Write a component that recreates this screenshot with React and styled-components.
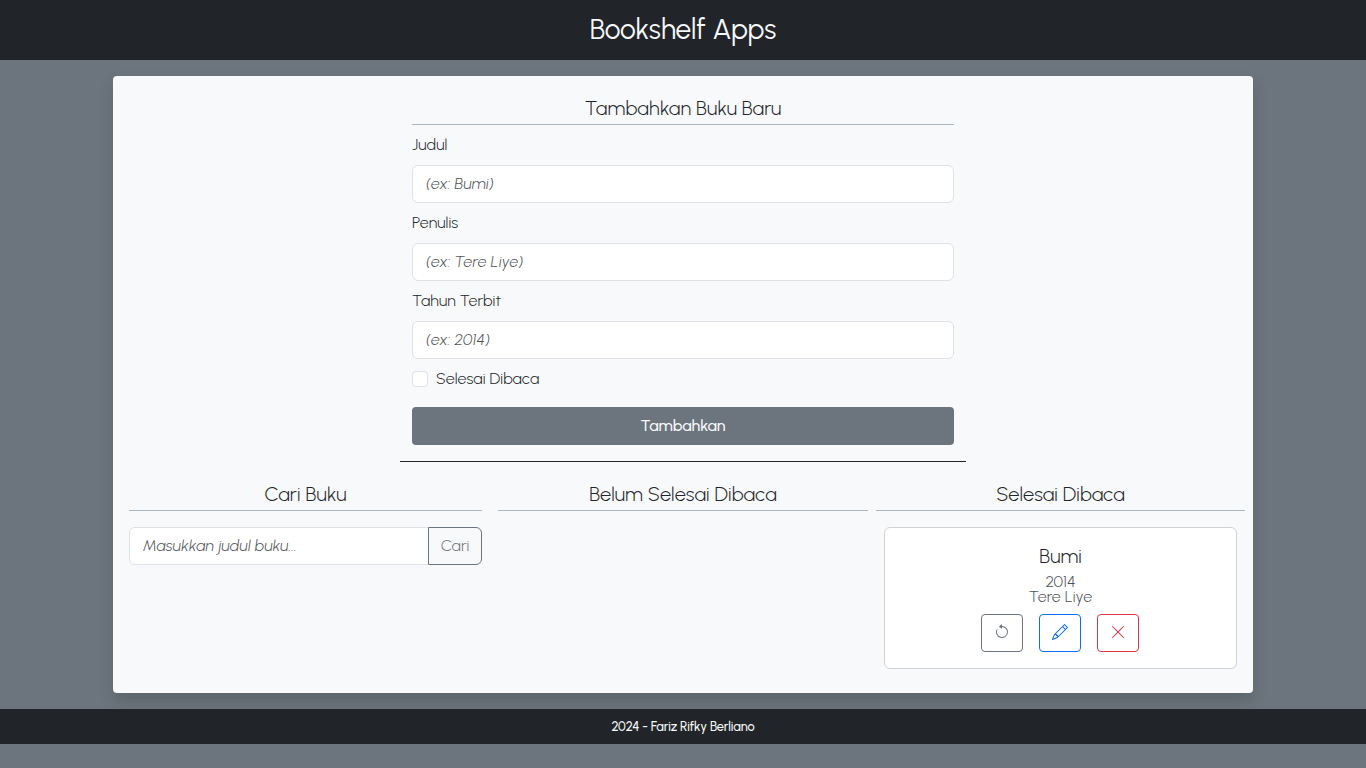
import React from "react";
import styled, { createGlobalStyle } from "styled-components";
import { BsArrowCounterclockwise, BsPencil, BsXLg } from "react-icons/bs";

const GlobalStyle = createGlobalStyle`
  *, *::before, *::after { box-sizing: border-box; }
  body {
    margin: 0;
    background: #6c757d;
    color: #212529;
    font: 300 16px/24px Urbanist, Lato, "Open Sans", sans-serif;
  }
  h1, h2, h3, p { margin: 0; }
`;

const Text = styled.span`
  letter-spacing: ${(p) => p.$track || 0}px;
  margin-right: ${(p) => -(p.$track || 0)}px;
  white-space: nowrap;
`;

const Header = styled.header`
  height: 60px;
  padding-top: 12px;
  background: #212529;
  color: #f8f9fa;
  text-align: center;
`;

const Title = styled.h1`
  font-size: 28px;
  line-height: 34px;
  font-weight: 430;
`;

const Main = styled.main`
  width: 1140px;
  height: 617px;
  margin: 16px auto;
  padding-top: 20px;
  background: #f8f9fa;
  border-radius: 4px;
  box-shadow: 0 8px 16px rgba(0, 0, 0, 0.15);
`;

const FormSection = styled.section`
  width: 566px;
  margin: 0 auto;
  padding: 0 12px 16px;
  border-bottom: 1px solid #212529;
`;

const SectionTitle = styled.h2`
  font-size: 20px;
  line-height: 24px;
  font-weight: 300;
  text-align: center;
  padding-bottom: 4px;
  border-bottom: 1px solid #adb5bd;
`;

const Field = styled.div`
  margin-top: 8px;
`;

const Label = styled.label`
  display: block;
  margin-bottom: 8px;
`;

const Input = styled.input`
  display: block;
  width: 100%;
  min-width: 0;
  height: 38px;
  padding: 5px 12px 7px 13px;
  border: 1px solid #dee2e6;
  border-radius: ${(p) => (p.$joined ? "6px 0 0 6px" : "6px")};
  background: #fff;
  font: inherit;
  letter-spacing: 0.14px;
  &::placeholder {
    color: #4f5459;
    opacity: 1;
    font-style: italic;
  }
`;

const CheckRow = styled.label`
  display: flex;
  align-items: center;
  gap: 8px;
  height: 24px;
  margin: 8px 0 16px;
`;

const Checkbox = styled.input`
  appearance: none;
  width: 16px;
  height: 16px;
  margin: 0;
  border: 1px solid #dee2e6;
  border-radius: 4px;
  background: #fff;
`;

const SubmitButton = styled.button`
  display: block;
  width: 100%;
  height: 38px;
  padding: 0 0 1px;
  border: 0;
  border-radius: 4px;
  background: #6c757d;
  color: #f8f9fa;
  font: inherit;
  font-weight: 500;
`;

const Columns = styled.div`
  display: grid;
  grid-template-columns: 353px 370px 369px;
  column-gap: 16px;
  padding: 20px 8px 0 16px;
`;

const Column = styled.section`
  margin-left: ${(p) => (p.$last ? "-8px" : "0")};
  width: ${(p) => (p.$last ? "369px" : "auto")};
`;

const SearchGroup = styled.form`
  display: flex;
  margin-top: 16px;
`;

const SearchButton = styled.button`
  flex: 0 0 54px;
  height: 38px;
  margin-left: -1px;
  padding: 0;
  border: 1px solid #6c757d;
  border-radius: 0 6px 6px 0;
  background: transparent;
  color: #6c757d;
  font: inherit;
  font-weight: 340;
`;

const BookCard = styled.article`
  height: 142px;
  margin: 16px 8px 0;
  padding-top: 16px;
  border: 1px solid #d0d2d4;
  border-radius: 6px;
  background: #fff;
  text-align: center;
`;

const BookTitle = styled.h3`
  font-size: 20px;
  line-height: 24px;
  font-weight: 300;
  margin-bottom: 6px;
`;

const BookMeta = styled.p`
  line-height: 15px;
  color: #4d5256;
`;

const Actions = styled.div`
  display: flex;
  justify-content: center;
  gap: 16px;
  margin: 10px 1px 0 0;
`;

const ActionButton = styled.button`
  display: flex;
  align-items: center;
  justify-content: center;
  width: 42px;
  height: 38px;
  padding: 0 0 2px;
  border: 1px solid ${(p) => p.$color};
  border-radius: 4px;
  background: transparent;
  color: ${(p) => p.$color};
  svg { width: 16px; height: 16px; }
`;

const Footer = styled.footer`
  height: 35px;
  background: #212529;
  color: #f8f9fa;
  text-align: center;
  font-size: 12.8px;
  line-height: 35px;
  font-weight: 500;
`;

const fields = [
  { label: "Judul", hint: "(ex: Bumi)" },
  { label: "Penulis", hint: "(ex: Tere Liye)" },
  { label: "Tahun Terbit", hint: "(ex: 2014)" },
];

export default function App() {
  return (
    <>
      <GlobalStyle />
      <Header>
        <Title><Text>Bookshelf Apps</Text></Title>
      </Header>
      <Main>
        <FormSection>
          <SectionTitle><Text $track={0.1}>Tambahkan Buku Baru</Text></SectionTitle>
          {fields.map((f) => (
            <Field key={f.label}>
              <Label><Text $track={0.1}>{f.label}</Text></Label>
              <Input placeholder={f.hint} />
            </Field>
          ))}
          <CheckRow>
            <Checkbox type="checkbox" />
            <Text $track={0.08}>Selesai Dibaca</Text>
          </CheckRow>
          <SubmitButton type="button"><Text $track={-0.1}>Tambahkan</Text></SubmitButton>
        </FormSection>
        <Columns>
          <Column>
            <SectionTitle><Text $track={0.14}>Cari Buku</Text></SectionTitle>
            <SearchGroup>
              <Input $joined placeholder="Masukkan judul buku..." />
              <SearchButton type="button"><Text $track={0.1}>Cari</Text></SearchButton>
            </SearchGroup>
          </Column>
          <Column>
            <SectionTitle><Text $track={0.1}>Belum Selesai Dibaca</Text></SectionTitle>
          </Column>
          <Column $last>
            <SectionTitle><Text $track={0.08}>Selesai Dibaca</Text></SectionTitle>
            <BookCard>
              <BookTitle><Text>Bumi</Text></BookTitle>
              <BookMeta><Text>2014</Text></BookMeta>
              <BookMeta><Text $track={0.08}>Tere Liye</Text></BookMeta>
              <Actions>
                <ActionButton $color="#6c757d" aria-label="Belum selesai"><BsArrowCounterclockwise /></ActionButton>
                <ActionButton $color="#0d6efd" aria-label="Ubah"><BsPencil /></ActionButton>
                <ActionButton $color="#dc3545" aria-label="Hapus"><BsXLg /></ActionButton>
              </Actions>
            </BookCard>
          </Column>
        </Columns>
      </Main>
      <Footer><Text $track={-0.08}>2024 - Fariz Rifky Berliano</Text></Footer>
    </>
  );
}
